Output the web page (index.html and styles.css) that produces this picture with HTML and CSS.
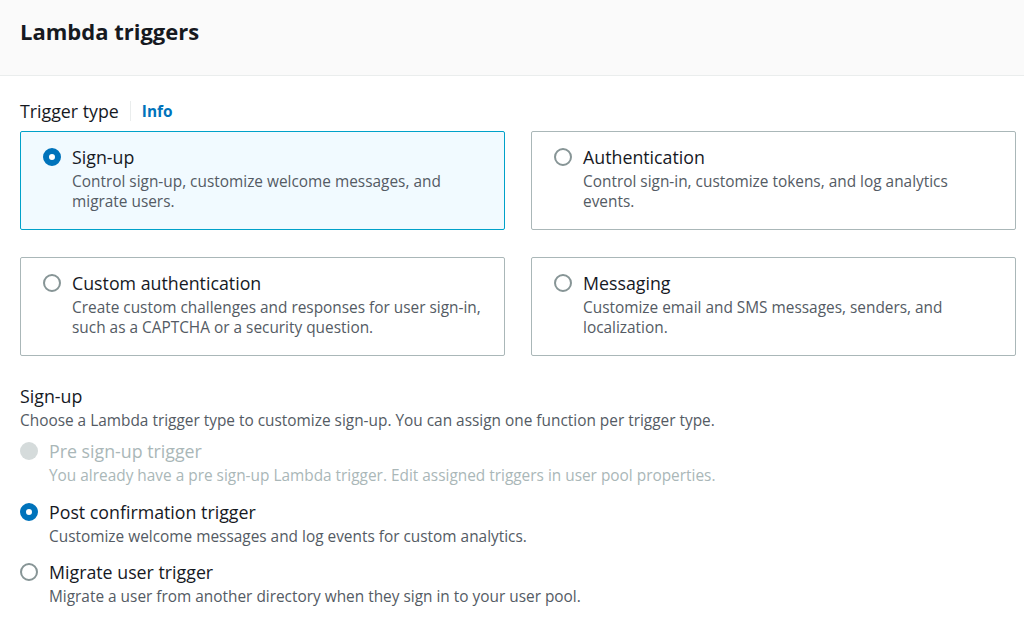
FILE: index.html
```html
<!DOCTYPE html>
<html>
<head>
<meta charset="utf-8">
<link rel="stylesheet" href="styles.css">
</head>
<body>
<div class="header"><h1 class="title">Lambda triggers</h1></div>
<div class="content">
  <div class="field-label"><span class="label-text">Trigger type</span><span class="divider"></span><a class="info">Info</a></div>
  <div class="tiles">
    <div class="tile selected">
      <span class="radio checked"></span>
      <div class="tile-body">
        <div class="tile-title">Sign-up</div>
        <div class="tile-desc">Control sign-up, customize welcome messages, and migrate users.</div>
      </div>
    </div>
    <div class="tile">
      <span class="radio"></span>
      <div class="tile-body">
        <div class="tile-title">Authentication</div>
        <div class="tile-desc">Control sign-in, customize tokens, and log analytics events.</div>
      </div>
    </div>
    <div class="tile">
      <span class="radio"></span>
      <div class="tile-body">
        <div class="tile-title">Custom authentication</div>
        <div class="tile-desc">Create custom challenges and responses for user sign-in, such as a CAPTCHA or a security question.</div>
      </div>
    </div>
    <div class="tile">
      <span class="radio"></span>
      <div class="tile-body">
        <div class="tile-title">Messaging</div>
        <div class="tile-desc">Customize email and SMS messages, senders, and localization.</div>
      </div>
    </div>
  </div>
  <div class="section">
    <div class="section-title">Sign-up</div>
    <div class="section-desc">Choose a Lambda trigger type to customize sign-up. You can assign one function per trigger type.</div>
    <div class="options">
      <div class="option disabled">
        <span class="radio disabled-radio"></span>
        <div class="option-body">
          <div class="option-title">Pre sign-up trigger</div>
          <div class="option-desc">You already have a pre sign-up Lambda trigger. Edit assigned triggers in user pool properties.</div>
        </div>
      </div>
      <div class="option">
        <span class="radio checked"></span>
        <div class="option-body">
          <div class="option-title">Post confirmation trigger</div>
          <div class="option-desc">Customize welcome messages and log events for custom analytics.</div>
        </div>
      </div>
      <div class="option">
        <span class="radio"></span>
        <div class="option-body">
          <div class="option-title">Migrate user trigger</div>
          <div class="option-desc">Migrate a user from another directory when they sign in to your user pool.</div>
        </div>
      </div>
    </div>
  </div>
</div>
</body>
</html>
```

FILE: styles.css
```css
* { box-sizing: border-box; }
body {
  margin: 0;
  font-family: "Open Sans", "Noto Sans", sans-serif;
  color: #16191f;
  background: #ffffff;
}
.header {
  background: #fafafa;
  border-bottom: 1px solid #eaeded;
  height: 76px;
  padding: 16px 20px 0;
}
.title {
  margin: 0;
  font-size: 22px;
  line-height: 30px;
  font-weight: 700;
  color: #16191f;
}
.content {
  padding: 0 8px 0 20px;
}
.field-label {
  display: flex;
  align-items: center;
  height: 22px;
  margin-top: 24px;
  font-size: 17.8px;
}
.label-text { line-height: 22px; }
.divider {
  width: 1px;
  height: 20px;
  background: #eaeded;
  margin: 0 11px 0 11px;
}
.info {
  color: #0073bb;
  font-weight: 700;
  font-size: 15.4px;
}
.tiles {
  margin-top: 9px;
  display: grid;
  grid-template-columns: 1fr 1fr;
  column-gap: 26px;
  row-gap: 27px;
}
.tile {
  display: flex;
  align-items: flex-start;
  height: 99px;
  border: 1px solid #aab7b8;
  border-radius: 2px;
  padding: 14px 20px 0 22px;
}
.tile.selected {
  background: #f1faff;
  border-color: #00a1c9;
}
.radio {
  flex: none;
  width: 18px;
  height: 18px;
  border-radius: 50%;
  border: 2px solid #879596;
  background: #fff;
  margin-top: 2px;
}
.radio.checked {
  border: 6px solid #0073bb;
}
.radio.disabled-radio {
  border: none;
  background: #d5dbdb;
}
.tile-body { margin-left: 11px; }
.tile-title {
  font-size: 17.8px;
  line-height: 22px;
}
.tile-desc {
  margin-top: 4px;
  font-size: 15.4px;
  line-height: 20px;
  color: #545b64;
}
.section { margin-top: 29px; }
.section-title {
  font-size: 17.8px;
  line-height: 22px;
}
.section-desc {
  margin-top: 4px;
  font-size: 15.4px;
  line-height: 20px;
  color: #545b64;
}
.options {
  margin-top: 9px;
  display: flex;
  flex-direction: column;
  gap: 14.5px;
}
.option {
  display: flex;
  align-items: flex-start;
}
.option-body { margin-left: 11px; }
.option-title {
  font-size: 17.8px;
  line-height: 22px;
}
.option-desc {
  margin-top: 4px;
  font-size: 15.4px;
  line-height: 20px;
  color: #545b64;
}
.option.disabled .option-title,
.option.disabled .option-desc { color: #aab7b8; }
```
